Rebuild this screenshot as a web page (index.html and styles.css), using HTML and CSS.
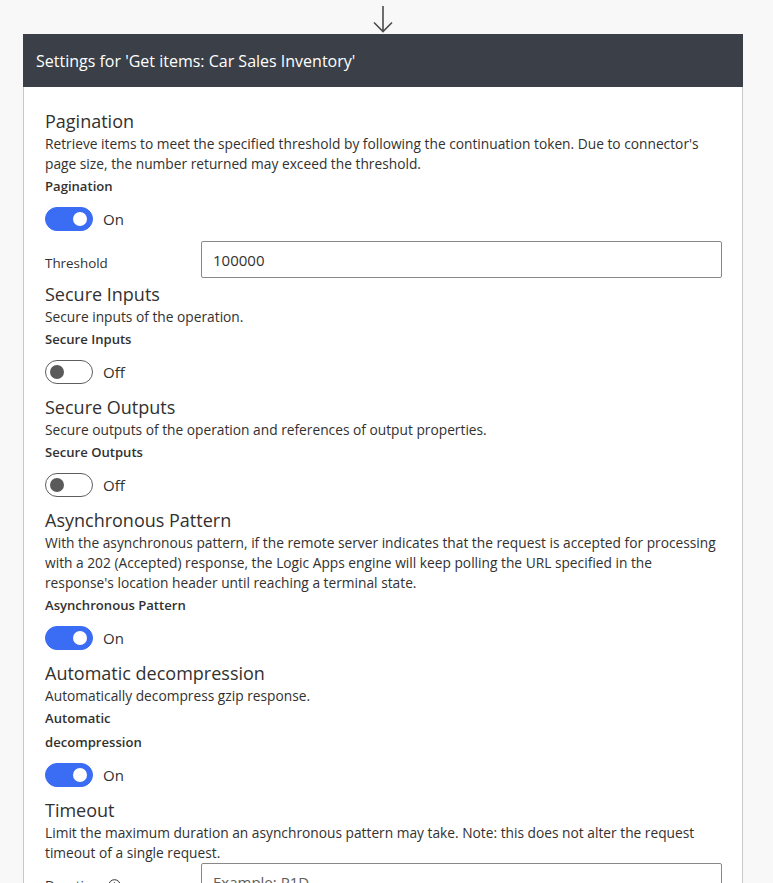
FILE: index.html
```html
<!DOCTYPE html>
<html lang="en">
<head>
<meta charset="utf-8">
<title>Settings</title>
<link rel="stylesheet" href="styles.css">
</head>
<body>
<div class="page">
  <div class="connector">
    <svg width="22" height="27" viewBox="0 0 22 27"><path d="M11 0 V25.5 M2 16.5 L11 25.5 L20 16.5" fill="none" stroke="#4b4b4b" stroke-width="1.6"/></svg>
  </div>
  <div class="card">
    <div class="card-header">Settings for 'Get items: Car Sales Inventory'</div>
    <div class="card-body">
      <section class="section first">
        <div class="title">Pagination</div>
        <div class="desc">Retrieve items to meet the specified threshold by following the continuation token. Due to connector's page size, the number returned may exceed the threshold.</div>
        <div class="label">Pagination</div>
        <div class="toggle-row"><span class="toggle on"><span class="knob"></span></span><span class="state">On</span></div>
        <div class="field-row threshold">
          <div class="field-label">Threshold</div>
          <div class="input">100000</div>
        </div>
      </section>
      <section class="section tight">
        <div class="title">Secure Inputs</div>
        <div class="desc">Secure inputs of the operation.</div>
        <div class="label">Secure Inputs</div>
        <div class="toggle-row"><span class="toggle off"><span class="knob"></span></span><span class="state">Off</span></div>
      </section>
      <section class="section">
        <div class="title">Secure Outputs</div>
        <div class="desc">Secure outputs of the operation and references of output properties.</div>
        <div class="label">Secure Outputs</div>
        <div class="toggle-row"><span class="toggle off"><span class="knob"></span></span><span class="state">Off</span></div>
      </section>
      <section class="section">
        <div class="title">Asynchronous Pattern</div>
        <div class="desc">With the asynchronous pattern, if the remote server indicates that the request is accepted for processing with a 202 (Accepted) response, the Logic Apps engine will keep polling the URL specified in the response's location header until reaching a terminal state.</div>
        <div class="label">Asynchronous Pattern</div>
        <div class="toggle-row"><span class="toggle on"><span class="knob"></span></span><span class="state">On</span></div>
      </section>
      <section class="section">
        <div class="title">Automatic decompression</div>
        <div class="desc">Automatically decompress gzip response.</div>
        <div class="label">Automatic decompression</div>
        <div class="toggle-row"><span class="toggle on"><span class="knob"></span></span><span class="state">On</span></div>
      </section>
      <section class="section">
        <div class="title">Timeout</div>
        <div class="desc">Limit the maximum duration an asynchronous pattern may take. Note: this does not alter the request timeout of a single request.</div>
        <div class="field-row">
          <div class="field-label">Duration <svg class="info" width="13" height="13" viewBox="0 0 13 13"><circle cx="6.5" cy="6.5" r="5.8" fill="none" stroke="#323130" stroke-width="1"/><path d="M6.5 5.6 V9.8" stroke="#323130" stroke-width="1.1"/><circle cx="6.5" cy="3.9" r="0.7" fill="#323130"/></svg></div>
          <div class="input placeholder">Example: P1D</div>
        </div>
      </section>
    </div>
  </div>
</div>
</body>
</html>
```

FILE: styles.css
```css
html, body {
  margin: 0;
  padding: 0;
}
body {
  background: #f8f8f8;
  font-family: "Open Sans", "Noto Sans", "Liberation Sans", sans-serif;
  color: #323130;
  height: 883px;
  overflow: hidden;
}
.page {
  padding-left: 23px;
  width: 720px;
}
.connector {
  height: 34px;
  display: flex;
  justify-content: center;
  align-items: flex-end;
}
.connector svg {
  display: block;
  margin-bottom: 1px;
}
.card {
  background: #ffffff;
  border-left: 1px solid #c8c8c8;
  border-right: 1px solid #c8c8c8;
  height: 849px;
}
.card-header {
  background: #3b4048;
  color: #ffffff;
  height: 53px;
  display: flex;
  align-items: center;
  padding-left: 13px;
  font-size: 16px;
  margin: 0 -1px;
  padding-top: 1px;
  box-sizing: border-box;
}
.card-body {
  padding: 22px 20px 0 21px;
}
.section {
  margin-top: 11px;
}
.section.first {
  margin-top: 0;
}
.section.tight {
  margin-top: 4px;
}
.title {
  font-size: 18px;
  line-height: 25px;
  height: 25px;
}
.desc {
  font-size: 13.75px;
  line-height: 20px;
}
.label {
  font-size: 13.1px;
  font-weight: 600;
  line-height: 24px;
  max-width: 150px;
}
.toggle-row {
  margin-top: 9px;
  height: 24px;
  display: flex;
  align-items: center;
}
.toggle {
  width: 48px;
  height: 24px;
  box-sizing: border-box;
  border-radius: 12px;
  display: flex;
  align-items: center;
  padding: 0 5px;
}
.toggle .knob {
  width: 14px;
  height: 14px;
  border-radius: 50%;
  display: block;
}
.toggle.on {
  background: #3a6cf4;
  border: 1px solid #3a6cf4;
  justify-content: flex-end;
}
.toggle.on .knob {
  background: #ffffff;
}
.toggle.off {
  background: #ffffff;
  border: 1px solid #605e5c;
  justify-content: flex-start;
  padding-left: 4px;
}
.toggle.off .knob {
  background: #5a5a5a;
}
.state {
  margin-left: 10px;
  font-size: 15px;
  line-height: 24px;
}
.field-row {
  display: flex;
  align-items: center;
}
.field-row.threshold {
  margin-top: 10px;
}
.field-label {
  width: 156px;
  flex: none;
  font-size: 13.4px;
  padding-top: 7px;
  display: flex;
  align-items: center;
  gap: 8px;
}
.input {
  flex: 1;
  height: 37px;
  box-sizing: border-box;
  border: 1px solid #8a8886;
  border-radius: 2px;
  padding: 0 11px;
  display: flex;
  align-items: center;
  font-size: 15px;
  color: #323130;
}
.input.placeholder {
  color: #605e5c;
}
```
